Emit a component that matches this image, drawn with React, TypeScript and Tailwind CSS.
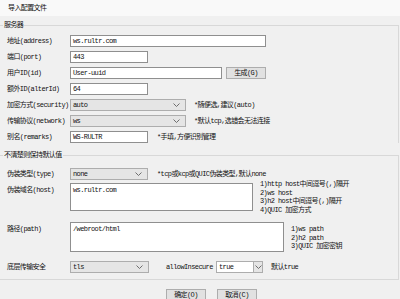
import React from 'react';

// 小控件：输入框、下拉框、按钮
function TextBox({ w, value }: { w: string; value?: string }) {
  return (
    <div className={`h-3 bg-white border border-[#8f8f8f] pl-[2px] leading-[10px] whitespace-nowrap overflow-hidden ${w}`}>
      {value}
    </div>
  );
}

function Chevron() {
  return (
    <svg width="7" height="4" viewBox="0 0 7 4" className="shrink-0">
      <polyline points="0.5,0.5 3.5,3.5 6.5,0.5" fill="none" stroke="#606060" strokeWidth="0.9" />
    </svg>
  );
}

function Select({ w, value }: { w: string; value: string }) {
  return (
    <div className={`h-3 bg-[#e5e5e5] border border-[#adadad] pl-[2px] pr-[5px] flex items-center justify-between leading-[10px] ${w}`}>
      <span>{value}</span>
      <Chevron />
    </div>
  );
}

function Button({ label }: { label: string }) {
  return (
    <div className="h-[14px] w-[40px] bg-[#e1e1e1] border border-[#adadad] flex justify-center pt-px leading-[9px]">
      {label}
    </div>
  );
}

function Row({ label, children, top }: { label: string; children?: React.ReactNode; top?: boolean }) {
  return (
    <div className={`flex ${top ? 'items-start' : 'items-center'}`}>
      <div className={`w-[63px] shrink-0 whitespace-nowrap leading-[10px] ${top ? 'pt-[2px]' : ''}`}>{label}</div>
      {children}
    </div>
  );
}

export default function App() {
  return (
    <div className="w-[400px] h-[299px] overflow-hidden bg-[#f0f0f0] text-[#111] text-[7px] tracking-[-0.6px] font-[family-name:'Liberation_Mono','Noto_Sans_CJK_SC',monospace]">
      {/* 标题 */}
      <div className="h-4 bg-[#f9f9f9] pl-2 flex items-center">导入配置文件</div>

      {/* 服务器 */}
      <fieldset className="mt-1 mr-px border-t border-r border-[#d8d8d8]">
        <legend className="ml-[3px] px-px text-[7px] leading-[10px]">服务器</legend>
        <div className="pl-[7px] pt-[5px] flex flex-col gap-1">
          <Row label="地址(address)">
            <TextBox w="w-[196px]" value="ws.rultr.com" />
          </Row>
          <Row label="端口(port)">
            <TextBox w="w-[78px]" value="443" />
          </Row>
          <Row label="用户ID(id)">
            <TextBox w="w-[152px]" value="User-uuid" />
            <div className="ml-1">
              <div className="h-3 w-[40px] bg-[#e1e1e1] border border-[#adadad] flex items-center justify-center leading-[10px]">生成(G)</div>
            </div>
          </Row>
          <Row label="额外ID(alterId)">
            <TextBox w="w-[78px]" value="64" />
          </Row>
          <Row label="加密方式(security)">
            <Select w="w-[116px]" value="auto" />
            <span className="ml-2 whitespace-nowrap">*随便选,建议(auto)</span>
          </Row>
          <Row label="传输协议(network)">
            <Select w="w-[116px]" value="ws" />
            <span className="ml-2 whitespace-nowrap">*默认tcp,选错会无法连接</span>
          </Row>
          <Row label="别名(remarks)">
            <TextBox w="w-[78px]" value="WS-RULTR" />
            <span className="ml-[9px] whitespace-nowrap">*手填,方便识别管理</span>
          </Row>
        </div>
      </fieldset>

      {/* 不清楚则保持默认值 */}
      <fieldset className="mt-[7px] mr-px border-t border-r border-b border-[#d8d8d8]">
        <legend className="ml-[3px] px-px text-[7px] leading-[10px]">不清楚则保持默认值</legend>
        <div className="pl-[7px] pt-2 pb-[6px] flex flex-col">
          <Row label="伪装类型(type)">
            <Select w="w-[78px]" value="none" />
            <span className="ml-[9px] whitespace-nowrap">*tcp或kcp或QUIC伪装类型,默认none</span>
          </Row>
          <div className="mt-[3px]">
            <Row label="伪装域名(host)" top>
              <div className="w-[183px] h-[28px] bg-white border border-[#8f8f8f] pl-[2px] pt-px leading-[10px]">ws.rultr.com</div>
              <div className="ml-[7px] -mt-[3px] leading-[8.5px] whitespace-nowrap">
                <div>1)http host中间逗号(,)隔开</div>
                <div>2)ws host</div>
                <div>3)h2 host中间逗号(,)隔开</div>
                <div>4)QUIC 加密方式</div>
              </div>
            </Row>
          </div>
          <div className="mt-2">
            <Row label="路径(path)" top>
              <div className="w-[214px] h-[30px] bg-white border border-[#8f8f8f] pl-[2px] pt-px leading-[10px]">/webroot/html</div>
              <div className="ml-[7px] mt-[3px] leading-[8.5px] whitespace-nowrap">
                <div>1)ws path</div>
                <div>2)h2 path</div>
                <div>3)QUIC 加密密钥</div>
              </div>
            </Row>
          </div>
          <div className="mt-[9px]">
            <Row label="底层传输安全">
              <Select w="w-[79px]" value="tls" />
              <span className="ml-[17px] w-[50px] whitespace-nowrap">allowInsecure</span>
              <div className="h-3 w-[47px] border border-[#adadad] bg-[#e5e5e5] flex">
                <div className="flex-1 bg-white border-r border-[#adadad] pl-[2px] leading-[10px]">true</div>
                <div className="w-[8px] flex items-center justify-center">
                  <Chevron />
                </div>
              </div>
              <span className="ml-2 whitespace-nowrap">默认true</span>
            </Row>
          </div>
        </div>
      </fieldset>

      {/* 按钮 */}
      <div className="mt-[9px] pl-[166px] flex gap-[11px]">
        <Button label="确定(O)" />
        <Button label="取消(C)" />
      </div>
    </div>
  );
}
